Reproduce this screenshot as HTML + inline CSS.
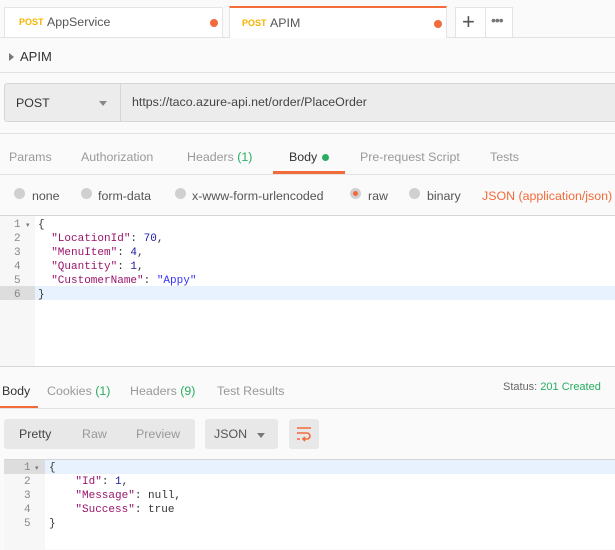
<!DOCTYPE html>
<html><head><style>
*{margin:0;padding:0;box-sizing:border-box}
body{width:615px;height:543px;background:#fafafa;font-family:"Liberation Sans",sans-serif;font-size:12.4px;color:#505050;position:relative;overflow:hidden}
.a{position:absolute;white-space:nowrap}
.hl{position:absolute;left:0;right:0;height:1px;background:#e2e2e2}
.tab{position:absolute;top:7px;height:30px;background:#fff;border:1px solid #e4e4e4;border-bottom:none}
.post{color:#f4b400;font-weight:bold;font-size:9px}
.dot{position:absolute;width:8px;height:8px;border-radius:50%;background:#f26b3a}
.radio{position:absolute;width:11px;height:11px;border-radius:50%;background:#d0d0d0;top:188px}
.mono{font-family:"Liberation Mono",monospace;font-size:11px}
.k{color:#99156b}
.n{color:#1a1aa6}
.s{color:#3333ff}
.g{color:#27ae60}
.ln{position:absolute;color:#888;font-family:"Liberation Mono",monospace;font-size:11px}
</style></head><body>
<div class="tab" style="left:4px;width:219px"><span class="a post" style="left:14px;top:9px">POST</span><span class="a" style="left:42px;top:7px;color:#555">AppService</span><div class="dot" style="left:205px;top:11px"></div></div>
<div class="tab" style="left:229px;width:218px;border-top:2px solid #f26b3a;height:32px;top:6px;z-index:2"><span class="a post" style="left:12px;top:10px">POST</span><span class="a" style="left:40px;top:8px;color:#555">APIM</span><div class="dot" style="left:204px;top:12px"></div></div>
<div class="tab" style="left:455px;width:58px"><span class="a" style="left:6px;top:1px;font-size:22px;color:#555">+</span><div class="a" style="left:29px;top:0;width:1px;height:30px;background:#e4e4e4"></div><span class="a" style="left:35px;top:4px;font-size:14px;color:#777;letter-spacing:-1px">•••</span></div>
<div class="hl" style="top:37px"></div>
<span class="a" style="left:9px;top:53px;width:0;height:0;border-left:5px solid #777;border-top:4px solid transparent;border-bottom:4px solid transparent"></span>
<span class="a" style="left:20px;top:49px;font-size:13px;color:#333">APIM</span>
<div class="hl" style="top:72px"></div>
<div class="a" style="left:4px;top:83px;width:620px;height:39px;background:#ececec;border:1px solid #d6d6d6;border-radius:3px"></div>
<div class="a" style="left:120px;top:84px;width:1px;height:37px;background:#d6d6d6"></div>
<span class="a" style="left:16px;top:96px;color:#333">POST</span>
<span class="a" style="left:99px;top:101px;border-top:5px solid #888;border-left:4px solid transparent;border-right:4px solid transparent"></span>
<span class="a" style="left:132px;top:95px;color:#444">https://taco.azure-api.net/order/PlaceOrder</span>
<div class="hl" style="top:133px"></div>
<span class="a" style="left:9px;top:150px;color:#999">Params</span>
<span class="a" style="left:81px;top:150px;color:#999">Authorization</span>
<span class="a" style="left:187px;top:150px;color:#999">Headers <span class="g">(1)</span></span>
<span class="a" style="left:289px;top:150px;color:#333">Body</span>
<div class="a" style="left:322px;top:154px;width:7px;height:7px;border-radius:50%;background:#27ae60"></div>
<span class="a" style="left:360px;top:150px;color:#999">Pre-request Script</span>
<span class="a" style="left:490px;top:150px;color:#999">Tests</span>
<div class="a" style="left:273px;top:171px;width:72px;height:3px;background:#f26b3a"></div>
<div class="hl" style="top:174px"></div>
<div class="radio" style="left:14px"></div><span class="a" style="left:32px;top:189px;color:#555">none</span>
<div class="radio" style="left:81px"></div><span class="a" style="left:98px;top:189px;color:#555">form-data</span>
<div class="radio" style="left:175px"></div><span class="a" style="left:192px;top:189px;color:#555">x-www-form-urlencoded</span>
<div class="radio" style="left:350px;background:#f26b3a;border:3px solid #d0d0d0"></div><span class="a" style="left:368px;top:189px;color:#555">raw</span>
<div class="radio" style="left:409px"></div><span class="a" style="left:427px;top:189px;color:#555">binary</span>
<span class="a" style="left:482px;top:189px;color:#f26b3a">JSON (application/json)</span>
<div class="hl" style="top:215px;background:#d6d6d6"></div>
<div class="a" style="left:0;top:216px;width:615px;height:150px;background:#fff"></div>
<div class="a" style="left:0;top:216px;width:35px;height:150px;background:#f7f7f7"></div>
<div class="a" style="left:35px;top:286px;width:580px;height:14px;background:#e8f2fe"></div>
<div class="a" style="left:0;top:286px;width:35px;height:14px;background:#ddd"></div>
<div class="ln" style="left:14px;top:218px;line-height:14px">1<br>2<br>3<br>4<br>5<br>6</div>
<span class="a" style="left:26px;top:221px;font-size:7px;color:#777">▾</span>
<div class="a mono" style="left:38px;top:218px;line-height:14px;color:#333">{<br>&nbsp;&nbsp;<span class="k">"LocationId"</span>: <span class="n">70</span>,<br>&nbsp;&nbsp;<span class="k">"MenuItem"</span>: <span class="n">4</span>,<br>&nbsp;&nbsp;<span class="k">"Quantity"</span>: <span class="n">1</span>,<br>&nbsp;&nbsp;<span class="k">"CustomerName"</span>: <span class="s">"Appy"</span><br>}</div>
<div class="hl" style="top:366px;background:#d6d6d6"></div>
<span class="a" style="left:2px;top:384px;color:#333">Body</span>
<span class="a" style="left:47px;top:384px;color:#999">Cookies <span class="g">(1)</span></span>
<span class="a" style="left:130px;top:384px;color:#999">Headers <span class="g">(9)</span></span>
<span class="a" style="left:217px;top:384px;color:#999">Test Results</span>
<span class="a" style="left:503px;top:381px;font-size:11px;color:#666">Status: <span class="g">201 Created</span></span>
<div class="a" style="left:0;top:406px;width:38px;height:3px;background:#f26b3a"></div>
<div class="hl" style="top:408px"></div>
<div class="a" style="left:4px;top:419px;width:191px;height:30px;background:#e8e8e8;border-radius:3px"></div>
<span class="a" style="left:19px;top:427px;color:#444">Pretty</span>
<span class="a" style="left:82px;top:427px;color:#999">Raw</span>
<span class="a" style="left:136px;top:427px;color:#999">Preview</span>
<div class="a" style="left:205px;top:419px;width:73px;height:30px;background:#e8e8e8;border-radius:3px"></div>
<span class="a" style="left:214px;top:427px;color:#555">JSON</span>
<span class="a" style="left:257px;top:433px;border-top:5px solid #777;border-left:4px solid transparent;border-right:4px solid transparent"></span>
<div class="a" style="left:289px;top:419px;width:30px;height:30px;background:#e8e8e8;border-radius:3px"></div>
<svg class="a" style="left:295px;top:425px" width="18" height="18" viewBox="0 0 18 18" fill="none" stroke="#f26b3a" stroke-width="1.6"><path d="M2 3h14M2 8h10a3 3 0 0 1 0 6H8M10 12l-2 2 2 2M2 14h3"/></svg>
<div class="a" style="left:4px;top:459px;width:615px;height:90px;background:#fff;border-top:1px solid #d6d6d6"></div>
<div class="a" style="left:4px;top:460px;width:41px;height:90px;background:#f7f7f7"></div>
<div class="a" style="left:45px;top:460px;width:570px;height:14px;background:#e8f2fe"></div>
<div class="a" style="left:4px;top:460px;width:41px;height:14px;background:#ddd"></div>
<div class="ln" style="left:24px;top:461px;line-height:14px">1<br>2<br>3<br>4<br>5</div>
<span class="a" style="left:35px;top:464px;font-size:7px;color:#777">▾</span>
<div class="a mono" style="left:49px;top:461px;line-height:14px;color:#333">{<br>&nbsp;&nbsp;&nbsp;&nbsp;<span class="k">"Id"</span>: <span class="n">1</span>,<br>&nbsp;&nbsp;&nbsp;&nbsp;<span class="k">"Message"</span>: null,<br>&nbsp;&nbsp;&nbsp;&nbsp;<span class="k">"Success"</span>: true<br>}</div>
</body></html>
